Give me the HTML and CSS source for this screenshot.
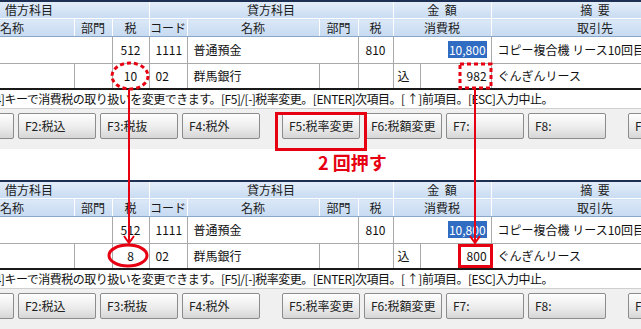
FILE: index.html
```html
<!DOCTYPE html>
<html lang="ja">
<head>
<meta charset="UTF-8">
<title>税率変更</title>
<link rel="stylesheet" href="styles.css">
</head>
<body>
<div class="page">

    <div class="screen">
        <div class="ledger-wrap">
            <table class="ledger">
                <colgroup>
                    <col style="width:74px"><col style="width:38px"><col style="width:37px"><col style="width:38px">
                    <col style="width:132px"><col style="width:39px"><col style="width:35px"><col style="width:27px">
                    <col style="width:71px"><col style="width:208px">
                </colgroup>
                <tr class="head1">
                    <th colspan="3" class="left">借方科目</th>
                    <th colspan="4">貸方科目</th>
                    <th colspan="2">金&nbsp;&nbsp;額</th>
                    <th>摘&nbsp;&nbsp;要</th>
                </tr>
                <tr class="head2">
                    <th class="first">名称</th><th>部門</th><th>税</th><th>コード</th>
                    <th>名称</th><th>部門</th><th>税</th><th colspan="2">消費税</th><th>取引先</th>
                </tr>
                <tr class="row-main">
                    <td colspan="2"></td><td class="c">512</td><td class="code">1111</td>
                    <td colspan="2">普通預金</td><td class="c">810</td>
                    <td colspan="2" class="num"><span class="sel">10,800</span></td>
                    <td>コピー複合機 リース10回目</td>
                </tr>
                <tr class="row-sub">
                    <td></td><td></td><td class="c">10</td><td class="code">02</td>
                    <td>群馬銀行</td><td></td><td></td><td class="kome">込</td>
                    <td class="num">982</td><td>ぐんぎんリース</td>
                </tr>
            </table>
        </div>
        <div class="message"><span class="msg-text">[F4]キーで消費税の取り扱いを変更できます。[F5]/[-]税率変更。[ENTER]次項目。[ ↑]前項目。[ESC]入力中止。</span></div>
        <div class="fkeys">
            <div class="fkey f1">F1:</div>
            <div class="fkey">F2:税込</div>
            <div class="fkey">F3:税抜</div>
            <div class="fkey">F4:税外</div>
            <div class="fkey group">F5:税率変更</div>
            <div class="fkey">F6:税額変更</div>
            <div class="fkey">F7:</div>
            <div class="fkey">F8:</div>
            <div class="fkey group">F9:</div>
        </div>
    </div>

    <div class="note">2 回押す</div>

    <div class="screen">
        <div class="ledger-wrap">
            <table class="ledger">
                <colgroup>
                    <col style="width:74px"><col style="width:38px"><col style="width:37px"><col style="width:38px">
                    <col style="width:132px"><col style="width:39px"><col style="width:35px"><col style="width:27px">
                    <col style="width:71px"><col style="width:208px">
                </colgroup>
                <tr class="head1">
                    <th colspan="3" class="left">借方科目</th>
                    <th colspan="4">貸方科目</th>
                    <th colspan="2">金&nbsp;&nbsp;額</th>
                    <th>摘&nbsp;&nbsp;要</th>
                </tr>
                <tr class="head2">
                    <th class="first">名称</th><th>部門</th><th>税</th><th>コード</th>
                    <th>名称</th><th>部門</th><th>税</th><th colspan="2">消費税</th><th>取引先</th>
                </tr>
                <tr class="row-main">
                    <td colspan="2"></td><td class="c">512</td><td class="code">1111</td>
                    <td colspan="2">普通預金</td><td class="c">810</td>
                    <td colspan="2" class="num"><span class="sel">10,800</span></td>
                    <td>コピー複合機 リース10回目</td>
                </tr>
                <tr class="row-sub">
                    <td></td><td></td><td class="c">8</td><td class="code">02</td>
                    <td>群馬銀行</td><td></td><td></td><td class="kome">込</td>
                    <td class="num">800</td><td>ぐんぎんリース</td>
                </tr>
            </table>
        </div>
        <div class="message"><span class="msg-text">[F4]キーで消費税の取り扱いを変更できます。[F5]/[-]税率変更。[ENTER]次項目。[ ↑]前項目。[ESC]入力中止。</span></div>
        <div class="fkeys">
            <div class="fkey f1">F1:</div>
            <div class="fkey">F2:税込</div>
            <div class="fkey">F3:税抜</div>
            <div class="fkey">F4:税外</div>
            <div class="fkey group">F5:税率変更</div>
            <div class="fkey">F6:税額変更</div>
            <div class="fkey">F7:</div>
            <div class="fkey">F8:</div>
            <div class="fkey group">F9:</div>
        </div>
    </div>

    <!-- red annotations drawn over the screenshots -->
    <svg class="marks" width="641" height="329" viewBox="0 0 641 329">
        <g fill="none" stroke="#e60012" stroke-width="3">
            <ellipse cx="130" cy="76" rx="18" ry="13" stroke-dasharray="4 3"/>
            <rect x="460" y="64" width="31" height="24" stroke-dasharray="4 3"/>
            <rect x="276.5" y="113.5" width="89" height="36"/>
            <ellipse cx="128" cy="255.5" rx="19" ry="10.5"/>
            <rect x="459.5" y="245.5" width="32" height="21"/>
        </g>
        <g fill="none" stroke="#e60012" stroke-width="2">
            <line x1="129" y1="89" x2="129" y2="243"/>
            <polyline points="124,236 129,243 134,236"/>
            <line x1="475" y1="88" x2="475" y2="243"/>
            <polyline points="470,236 475,243 480,236"/>
        </g>
    </svg>
</div>
</body>
</html>
```

FILE: styles.css
```css
body {
    margin: 0;
    background: #ffffff;
    font-family: "Noto Sans CJK JP", "DejaVu Sans", sans-serif;
    font-size: 12px;
    color: #111;
}

.page {
    position: relative;
    width: 641px;
    height: 329px;
    overflow: hidden;
}

.screen {
    width: 641px;
}

.ledger-wrap {
    width: 641px;
    overflow: hidden;
    border-bottom: 2px solid #1a1a1a;
}

.ledger {
    width: 699px;
    table-layout: fixed;
    border-collapse: collapse;
}

.ledger th,
.ledger td {
    padding: 0;
    white-space: nowrap;
    overflow: hidden;
    line-height: 14px;
}

.ledger th {
    font-weight: normal;
    text-align: center;
    color: #1a1a1a;
    border-right: 1px solid #ffffff;
}

.head1 th {
    height: 16px;
    background: linear-gradient(#e3edf9, #c9dcf2);
    border-top: 2px solid #1d2f52;
    border-bottom: 1px solid #ffffff;
}

.head2 th {
    height: 17px;
    background: linear-gradient(#dbe8f7, #c6daf1);
    border-bottom: 1px solid #8aa6c9;
}

.ledger th.left {
    text-align: left;
    padding-left: 5px;
}

.ledger th.first {
    text-align: left;
}

.ledger td {
    background: #ffffff;
    border-right: 1px solid #a9a9a9;
    border-bottom: 1px solid #a9a9a9;
    padding-left: 6px;
}

.row-main td {
    height: 26px;
}

.row-sub td {
    height: 24px;
    border-bottom: none;
}

.ledger td.c {
    text-align: center;
    padding-left: 0;
}

.ledger td.kome {
    padding-left: 4px;
}

.ledger td.num {
    text-align: right;
    padding-left: 0;
    padding-right: 4px;
}

.sel {
    background: #2f6cc2;
    color: #ffffff;
    padding: 0 1px;
}

.message {
    height: 18px;
    line-height: 18px;
    border-bottom: 1px solid #cfcfcf;
    white-space: nowrap;
    overflow: hidden;
}

.msg-text {
    display: inline-block;
    margin-left: -15px;
    letter-spacing: -0.5px;
}

.fkeys {
    height: 40px;
    background: #f0f0f0;
    display: flex;
    align-items: flex-start;
    gap: 4px;
    padding-top: 4px;
    box-sizing: border-box;
    margin-left: -64px;
    overflow: hidden;
}

.fkey {
    flex: 0 0 78px;
    height: 26px;
    line-height: 24px;
    box-sizing: border-box;
    padding-left: 6px;
    border: 1px solid #8c8c8c;
    border-radius: 2px;
    background: linear-gradient(#fefefe, #ececec 55%, #d6d6d6);
    color: #222;
    white-space: nowrap;
    overflow: hidden;
}

.fkey.group {
    margin-left: 18px;
}

.note {
    height: 31px;
    padding-left: 318px;
    box-sizing: border-box;
    padding-top: 3px;
    font-size: 18px;
    line-height: 21px;
    font-weight: bold;
    color: #e60012;
}

.marks {
    position: absolute;
    left: 0;
    top: 0;
    pointer-events: none;
}
```
